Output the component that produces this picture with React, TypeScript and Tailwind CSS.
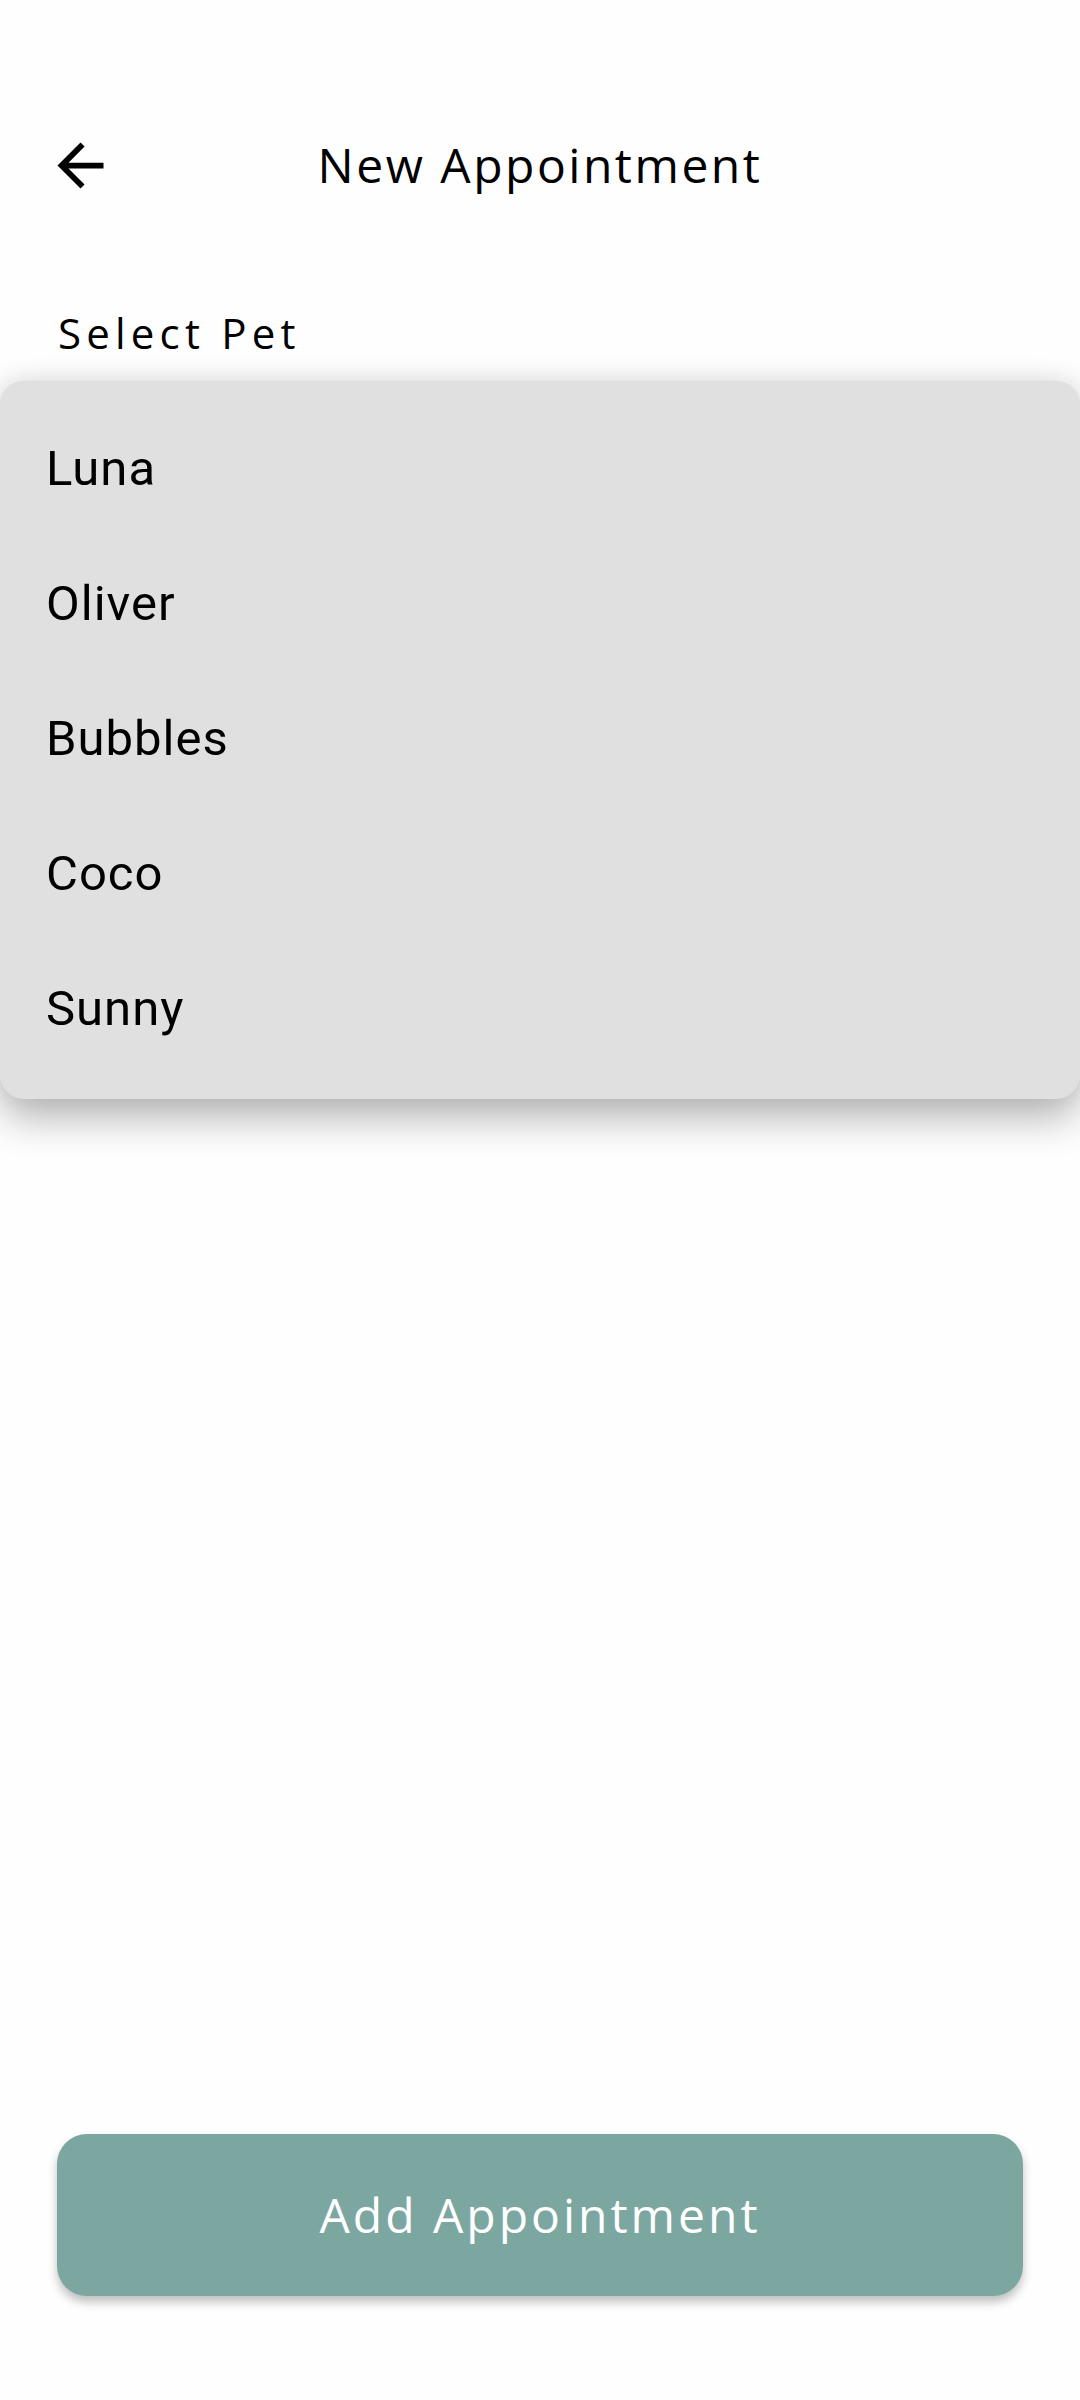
const PETS = ['Luna', 'Oliver', 'Bubbles', 'Coco', 'Sunny'];

export default function App() {
  return (
    <div className="relative w-[1080px] h-[2400px] bg-[#fefefe] flex flex-col font-['Open_Sans',sans-serif] text-black">
      {/* Header */}
      <div className="mt-[109px] h-[112px] flex items-center relative">
        <button className="absolute left-[46px] w-[69px] h-[69px] flex items-center justify-center">
          <svg viewBox="0 0 24 24" className="w-[69px] h-[69px]" fill="currentColor">
            <path d="M20 11H7.83l5.59-5.59L12 4l-8 8 8 8 1.41-1.41L7.83 13H20v-2z" />
          </svg>
        </button>
        <h1 className="flex-1 text-center text-[48px] font-medium tracking-[2.5px]">New Appointment</h1>
      </div>

      {/* Label */}
      <div className="mt-[84px] pl-[58px] text-[42px] font-medium tracking-[5.2px] leading-[56px]">Select Pet</div>

      <div className="flex-1" />

      {/* Submit */}
      <div className="px-[57px] mb-[104px]">
        <button className="w-full h-[162px] rounded-[30px] bg-[#7ca7a0] text-white text-[48px] font-medium tracking-[3px] shadow-[0_6px_10px_rgba(0,0,0,0.25)]">
          Add Appointment
        </button>
      </div>

      {/* Dropdown menu overlay */}
      <div className="absolute left-0 right-0 top-[381px] bg-[#e0e0e0] rounded-[24px] pt-[20px] pb-[23px] shadow-[0_18px_40px_rgba(0,0,0,0.3),0_-4px_24px_rgba(0,0,0,0.06)] font-['Roboto',sans-serif]">
        {PETS.map(p => (
          <div key={p} className="h-[135px] flex items-center pl-[46px] text-[49px] tracking-[1px]">
            {p}
          </div>
        ))}
      </div>
    </div>
  );
}
